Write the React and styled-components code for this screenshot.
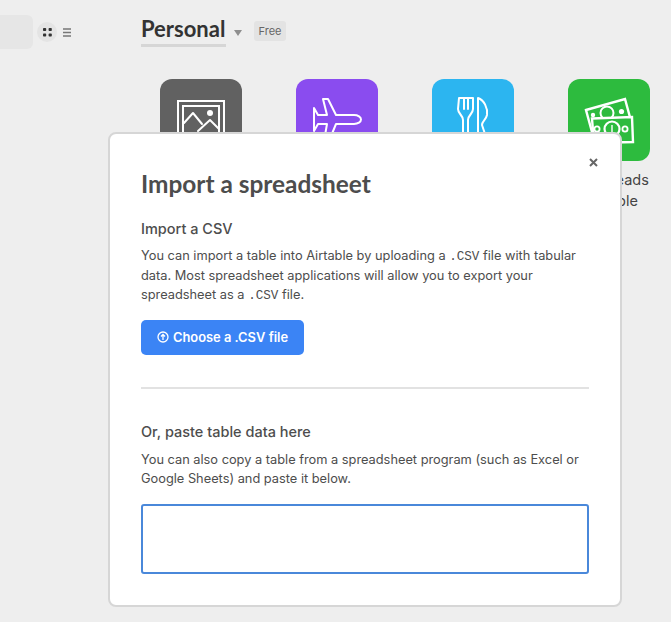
import React from "react";
import styled, { createGlobalStyle } from "styled-components";

const Global = createGlobalStyle`
  html, body { margin: 0; padding: 0; background: #eeeeee; }
  body { width: 671px; height: 622px; overflow: hidden; font-family: Inter, "Liberation Sans", sans-serif; }
  * { box-sizing: border-box; }
`;

const Page = styled.div`
  position: relative;
  width: 671px;
  height: 622px;
  display: grid;
  grid-template-columns: 141px 1fr;
  overflow: hidden;
`;
const Sidebar = styled.aside`
  display: flex;
  align-items: center;
  align-self: start;
  padding-top: 15px;
`;
const SideBlock = styled.div`
  width: 33px;
  height: 34px;
  background: #e6e6e6;
  border-radius: 0 6px 6px 0;
`;
const ViewToggle = styled.button`
  width: 20px;
  height: 20px;
  margin-left: ${(p) => p.$gap}px;
  padding: 0;
  border: 0;
  border-radius: 50%;
  background: ${(p) => (p.$active ? "#e4e4e4" : "transparent")};
  display: flex;
  align-items: center;
  justify-content: center;
`;
const Main = styled.main`
  padding-top: 15px;
  min-width: 0;
`;
const TitleRow = styled.div`
  display: flex;
  align-items: center;
  height: 32px;
`;
const WorkspaceName = styled.h1`
  margin: 0;
  width: 85px;
  height: 32px;
  border-bottom: 3px solid #d6d6d6;
  font-family: Lato, sans-serif;
  font-size: 22px;
  line-height: 27px;
  font-weight: 700;
  color: #333;
  white-space: nowrap;
`;
const Caret = styled.span`
  width: 0;
  height: 0;
  margin: 4px 0 0 8px;
  border-left: 4.5px solid transparent;
  border-right: 4.5px solid transparent;
  border-top: 6px solid #8e8e8e;
`;
const Badge = styled.span`
  margin: -1px 0 0 12px;
  width: 32px;
  height: 20px;
  border-radius: 3px;
  background: #e3e3e3;
  color: #666;
  font-size: 11px;
  line-height: 20px;
  text-align: center;
`;
const TileRow = styled.div`
  display: flex;
  gap: 54px;
  margin-top: 32px;
  padding-left: 19px;
`;
const TileItem = styled.div`
  width: 82px;
  flex: none;
`;
const Tile = styled.div`
  width: 82px;
  height: 82px;
  border-radius: 12px;
  background: ${(p) => p.$color};
`;
const TileLabel = styled.div`
  margin-top: 8px;
  width: 100px;
  margin-left: -9px;
  font-size: 14.5px;
  line-height: 21px;
  color: #444;
  text-align: center;
`;

const Modal = styled.section`
  position: absolute;
  left: 108px;
  top: 132px;
  width: 514px;
  height: 475px;
  background: #fff;
  border: 2px solid #d6d6d6;
  border-radius: 8px;
  padding: 32px 31px 0;
`;
const CloseButton = styled.button`
  position: absolute;
  top: 20px;
  right: 19px;
  width: 16px;
  height: 16px;
  padding: 0;
  border: 0;
  background: none;
  display: flex;
  align-items: center;
  justify-content: center;
`;
const ModalTitle = styled.h2`
  margin: 0;
  font-family: Lato, sans-serif;
  font-size: 24.4px;
  line-height: 36px;
  font-weight: 700;
  color: #4d4d4d;
`;
const SectionTitle = styled.h3`
  margin: ${(p) => p.$top}px 0 0;
  font-size: 14.5px;
  line-height: 20px;
  font-weight: 500;
  color: #4d4d4d;
`;
const Paragraph = styled.p`
  margin: ${(p) => p.$top}px 0 0;
  font-size: 12.8px;
  line-height: 19.5px;
  color: #4d4d4d;
`;
const Code = styled.code`
  font-family: "Liberation Mono", monospace;
  font-size: 12.6px;
  line-height: 0;
  font-weight: 400;
`;
const PrimaryButton = styled.button`
  display: flex;
  align-items: center;
  justify-content: center;
  gap: 4px;
  width: 163px;
  height: 35px;
  margin-top: 15px;
  padding: 0;
  border: 0;
  border-radius: 5px;
  background: #3b84f5;
  color: #fff;
  font-family: Inter, sans-serif;
  font-size: 12.9px;
  font-weight: 600;
`;
const Divider = styled.hr`
  margin: 32px 0 0;
  border: 0;
  height: 2px;
  background: #e2e2e2;
`;
const PasteBox = styled.textarea`
  display: block;
  width: 448px;
  height: 70px;
  margin-top: 15px;
  padding: 6px;
  border: 2px solid #4a88da;
  border-radius: 3px;
  outline: none;
  resize: none;
  background: #fff;
`;

const Stroke = { fill: "none", stroke: "#fff", strokeWidth: 2, strokeLinejoin: "round", strokeLinecap: "round" };

const PictureIcon = () => (
  <svg width="82" height="82" viewBox="0 0 82 82">
    <g {...Stroke}>
      <rect x="18" y="22" width="46" height="46" strokeLinejoin="miter" />
      <rect x="23" y="27" width="36" height="36" strokeLinejoin="miter" />
      <path d="M24 44 L33 34 L42 45 M38 52 L50 41 L59 50" />
    </g>
    <circle cx="50" cy="34" r="3" fill="#fff" />
  </svg>
);
const PlaneIcon = () => (
  <svg width="82" height="82" viewBox="0 0 82 82">
    <path
      {...Stroke}
      d="M58 36 C62 36 65 38 65 40.5 C65 43 62 45 58 45 H40 L33 62 H28 L31 45 H22 L18 52 V29 L22 36 H31 L27 20 H32 L40 36 Z"
    />
  </svg>
);
const CutleryIcon = () => (
  <svg width="82" height="82" viewBox="0 0 82 82">
    <g {...Stroke}>
      <path d="M27 19 H41 V30 C41 35 36 36 36 41 V56 H31 V41 C31 36 26 35 26 30 Z M32 19 V30 M36 19 V30" />
      <path d="M46 19 C52 21 56 29 55 36 C54 41 50 42 50 46 L54 58 M46 19 V58" />
    </g>
  </svg>
);
const MoneyIcon = () => (
  <svg width="82" height="82" viewBox="0 0 82 82">
    <g fill="#2dbb3e" stroke="#fff" strokeWidth="2.4" strokeLinejoin="miter">
      <path d="M18 31 L57 20 L63 42 L24 53 Z" />
      <circle cx="39" cy="34" r="6.5" strokeWidth="2" />
      <circle cx="53.5" cy="32.5" r="2.6" fill="#fff" strokeWidth="0" />
      <circle cx="25" cy="36" r="2.2" fill="#fff" strokeWidth="0" />
      <path d="M24 39.5 L64 38 L65 63 L26 64 Z" />
      <circle cx="44" cy="50" r="7.5" strokeWidth="2.2" />
      <circle cx="29" cy="50" r="2.6" strokeWidth="1.8" />
      <circle cx="57" cy="50" r="2.6" strokeWidth="1.8" />
    </g>
    <path d="M44 46 V54" stroke="#fff" strokeWidth="1.4" />
  </svg>
);
const GridIcon = () => (
  <svg width="9" height="9" viewBox="0 0 9 9">
    <g fill="#333">
      <rect width="3.2" height="3" rx=".8" />
      <rect x="5.6" width="3.2" height="3" rx=".8" />
      <rect y="5.6" width="3.2" height="3" rx=".8" />
      <rect x="5.6" y="5.6" width="3.2" height="3" rx=".8" />
    </g>
  </svg>
);
const ListIcon = () => (
  <svg width="8" height="9" viewBox="0 0 8 9">
    <path d="M0 1 H8 M0 4.5 H8 M0 8 H8" stroke="#777" strokeWidth="1.6" />
  </svg>
);
const CloseIcon = () => (
  <svg width="9" height="9" viewBox="0 0 9 9">
    <path d="M1 1 L8 8 M8 1 L1 8" stroke="#666" strokeWidth="2" />
  </svg>
);
const UploadIcon = () => (
  <svg width="12" height="12" viewBox="0 0 12 12">
    <circle cx="6" cy="6" r="5" fill="none" stroke="#fff" strokeWidth="1.3" />
    <path d="M6 9 V3.6 M4 5.5 L6 3.4 L8 5.5" fill="none" stroke="#fff" strokeWidth="1.3" />
  </svg>
);

const tiles = [
  { color: "#616161", icon: <PictureIcon /> },
  { color: "#8a4cef", icon: <PlaneIcon /> },
  { color: "#2cb5f0", icon: <CutleryIcon /> },
  { color: "#2dbb3e", icon: <MoneyIcon />, label: "Bank Leads example" },
];

export default function App() {
  return (
    <>
      <Global />
      <Page>
        <Sidebar>
          <SideBlock />
          <ViewToggle $active $gap={4}><GridIcon /></ViewToggle>
          <ViewToggle $gap={0}><ListIcon /></ViewToggle>
        </Sidebar>
        <Main>
          <TitleRow>
            <WorkspaceName>Personal</WorkspaceName>
            <Caret />
            <Badge>Free</Badge>
          </TitleRow>
          <TileRow>
            {tiles.map((t) => (
              <TileItem key={t.color}>
                <Tile $color={t.color}>{t.icon}</Tile>
                {t.label && <TileLabel>{t.label}</TileLabel>}
              </TileItem>
            ))}
          </TileRow>
        </Main>
        <Modal>
          <CloseButton aria-label="Close"><CloseIcon /></CloseButton>
          <ModalTitle>Import a spreadsheet</ModalTitle>
          <SectionTitle $top={17}>Import a CSV</SectionTitle>
          <Paragraph $top={7}>
            You can import a table into Airtable by uploading a <Code>.CSV</Code> file with tabular data. Most spreadsheet applications will allow you to export your spreadsheet as a <Code>.CSV</Code> file.
          </Paragraph>
          <PrimaryButton><UploadIcon />Choose a .CSV file</PrimaryButton>
          <Divider />
          <SectionTitle $top={33}>Or, paste table data here</SectionTitle>
          <Paragraph $top={8}>
            You can also copy a table from a spreadsheet program (such as Excel or Google Sheets) and paste it below.
          </Paragraph>
          <PasteBox />
        </Modal>
      </Page>
    </>
  );
}
